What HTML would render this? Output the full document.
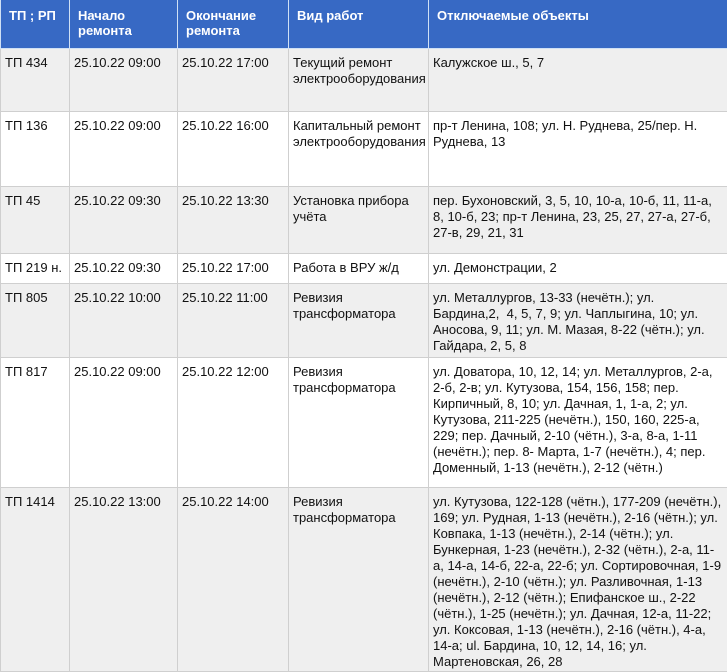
<!DOCTYPE html>
<html><head><meta charset="utf-8"><style>
body{margin:0;background:#fff;font-family:"Liberation Sans",Arial,sans-serif;font-size:13px;color:#111;}
table{border-collapse:collapse;table-layout:fixed;width:727px;position:absolute;left:0;top:0}
td,th{border:1px solid #cfcfcf;vertical-align:top;padding:6px 2px 0 4px;line-height:16px;text-align:left;overflow:hidden;white-space:nowrap}
th{background:#3769c4;color:#fff;font-weight:bold;font-size:13px;line-height:15px;padding:8px 2px 0 8px;border-color:#cfe0f5;border-top:none}
tr.o td{background:#efefef}
</style></head><body>
<table>
<colgroup><col style="width:69px"><col style="width:108px"><col style="width:111px"><col style="width:140px"><col style="width:299px"></colgroup>
<tr style="height:48px"><th>ТП ; РП</th><th>Начало<br>ремонта</th><th>Окончание<br>ремонта</th><th>Вид работ</th><th>Отключаемые объекты</th></tr>
<tr class="o" style="height:63px"><td>ТП 434</td><td>25.10.22 09:00</td><td>25.10.22 17:00</td><td>Текущий ремонт<br>электрооборудования</td><td>Калужское ш., 5, 7</td></tr>
<tr style="height:75px"><td>ТП 136</td><td>25.10.22 09:00</td><td>25.10.22 16:00</td><td>Капитальный ремонт<br>электрооборудования</td><td>пр-т Ленина, 108; ул. Н. Руднева, 25/пер. Н.<br>Руднева, 13</td></tr>
<tr class="o" style="height:67px"><td>ТП 45</td><td>25.10.22 09:30</td><td>25.10.22 13:30</td><td>Установка прибора<br>учёта</td><td>пер. Бухоновский, 3, 5, 10, 10-а, 10-б, 11, 11-а,<br>8, 10-б, 23; пр-т Ленина, 23, 25, 27, 27-а, 27-б,<br>27-в, 29, 21, 31</td></tr>
<tr style="height:30px"><td>ТП 219 н.</td><td>25.10.22 09:30</td><td>25.10.22 17:00</td><td>Работа в ВРУ ж/д</td><td>ул. Демонстрации, 2</td></tr>
<tr class="o" style="height:74px"><td>ТП 805</td><td>25.10.22 10:00</td><td>25.10.22 11:00</td><td>Ревизия<br>трансформатора</td><td>ул. Металлургов, 13-33 (нечётн.); ул.<br>Бардина,2, &nbsp;4, 5, 7, 9; ул. Чаплыгина, 10; ул.<br>Аносова, 9, 11; ул. М. Мазая, 8-22 (чётн.); ул.<br>Гайдара, 2, 5, 8</td></tr>
<tr style="height:130px"><td>ТП 817</td><td>25.10.22 09:00</td><td>25.10.22 12:00</td><td>Ревизия<br>трансформатора</td><td>ул. Доватора, 10, 12, 14; ул. Металлургов, 2-а,<br>2-б, 2-в; ул. Кутузова, 154, 156, 158; пер.<br>Кирпичный, 8, 10; ул. Дачная, 1, 1-а, 2; ул.<br>Кутузова, 211-225 (нечётн.), 150, 160, 225-а,<br>229; пер. Дачный, 2-10 (чётн.), 3-а, 8-а, 1-11<br>(нечётн.); пер. 8- Марта, 1-7 (нечётн.), 4; пер.<br>Доменный, 1-13 (нечётн.), 2-12 (чётн.)</td></tr>
<tr class="o" style="height:184px"><td>ТП 1414</td><td>25.10.22 13:00</td><td>25.10.22 14:00</td><td>Ревизия<br>трансформатора</td><td>ул. Кутузова, 122-128 (чётн.), 177-209 (нечётн.),<br>169; ул. Рудная, 1-13 (нечётн.), 2-16 (чётн.); ул.<br>Ковпака, 1-13 (нечётн.), 2-14 (чётн.); ул.<br>Бункерная, 1-23 (нечётн.), 2-32 (чётн.), 2-а, 11-<br>а, 14-а, 14-б, 22-а, 22-б; ул. Сортировочная, 1-9<br>(нечётн.), 2-10 (чётн.); ул. Разливочная, 1-13<br>(нечётн.), 2-12 (чётн.); Епифанское ш., 2-22<br>(чётн.), 1-25 (нечётн.); ул. Дачная, 12-а, 11-22;<br>ул. Коксовая, 1-13 (нечётн.), 2-16 (чётн.), 4-а,<br>14-а; ul. Бардина, 10, 12, 14, 16; ул.<br>Мартеновская, 26, 28</td></tr>
</table>
</body></html>
